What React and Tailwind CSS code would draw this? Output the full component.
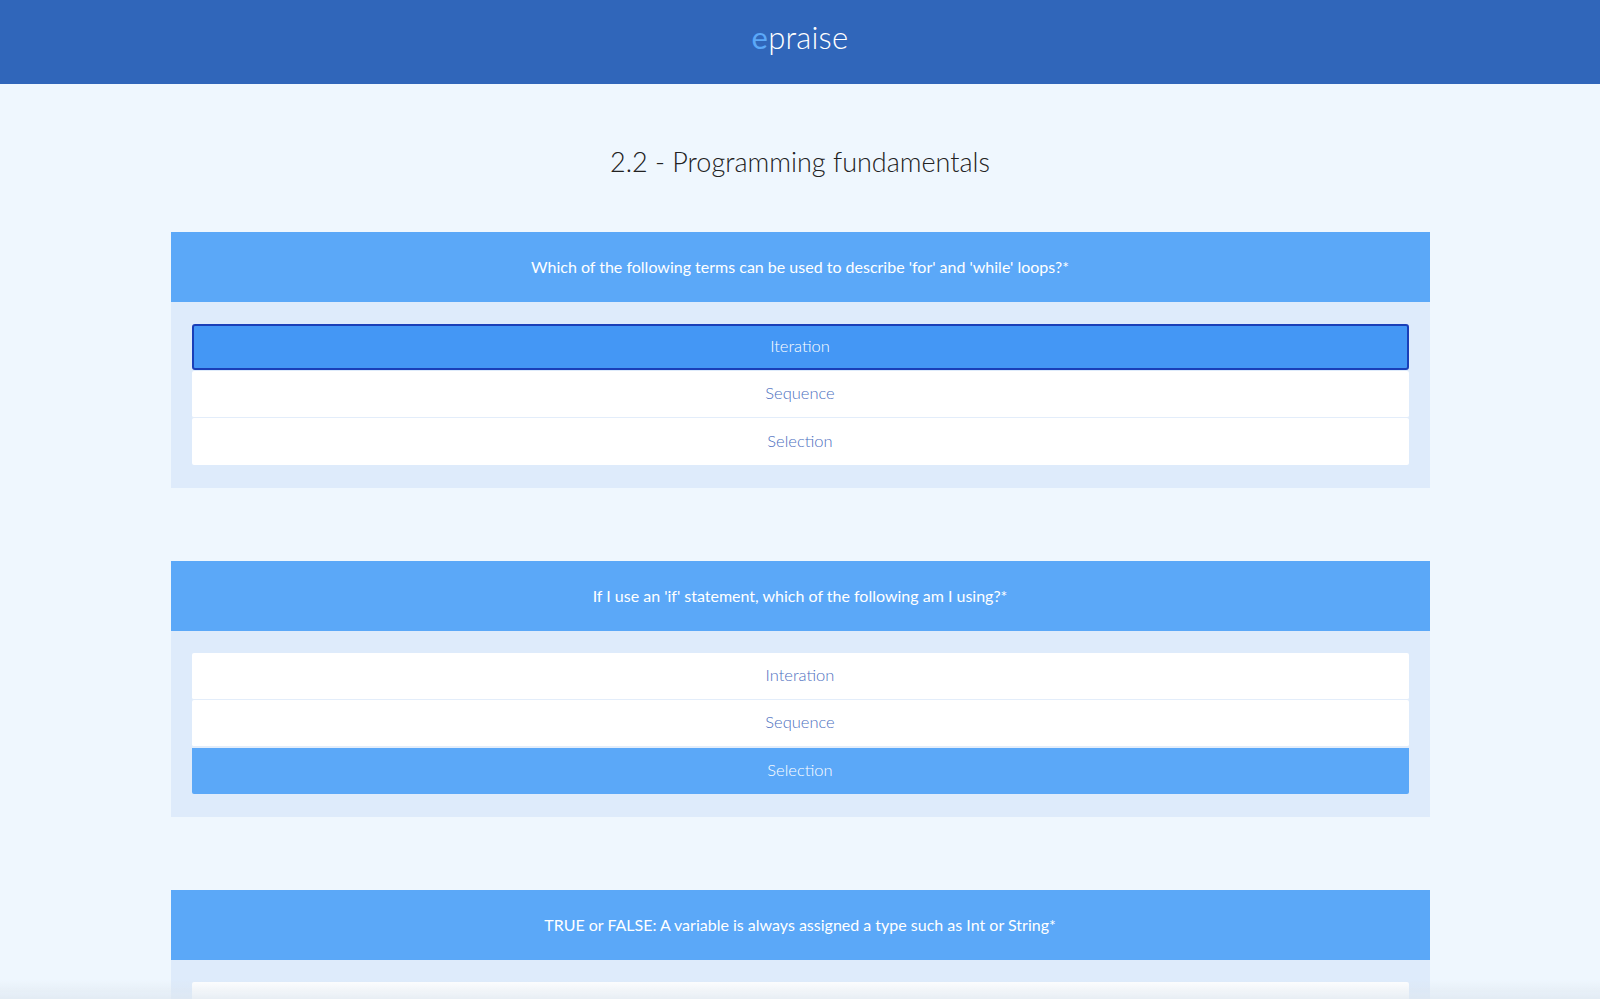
import { useState } from 'react'

const questions = [
  {
    id: 1,
    text: "Which of the following terms can be used to describe 'for' and 'while' loops?*",
    options: ['Iteration', 'Sequence', 'Selection'],
    selected: 0,
    focused: true,
  },
  {
    id: 2,
    text: "If I use an 'if' statement, which of the following am I using?*",
    options: ['Interation', 'Sequence', 'Selection'],
    selected: 2,
  },
  {
    id: 3,
    text: 'TRUE or FALSE: A variable is always assigned a type such as Int or String*',
    options: ['True', 'False'],
    selected: null,
  },
]

function Question({ q }) {
  const [selected, setSelected] = useState(q.selected)
  return (
    <div className="bg-[#deebfb]">
      <div className="h-[70px] bg-[#5ba8f8] flex items-center justify-center text-white text-[16px] font-normal">
        {q.text}
      </div>
      <div className="px-[21px] pt-[22px] pb-[23px] flex flex-col">
        {q.options.map((opt, i) => {
          const active = selected === i
          const focused = active && q.focused
          return (
            <button
              key={opt}
              onClick={() => setSelected(i)}
              className={
                focused
                  ? 'h-[46px] bg-[#4497f5] text-white font-light border-2 border-[#1a3fb8] rounded-[3px] text-[16.5px] mb-px'
                  : active
                  ? 'h-[47px] bg-[#5ba8f8] text-white font-light text-[16.5px] rounded-b-[2px] border-t border-[#e3edfa]'
                  : 'h-[47px] bg-white text-[#4d6fc0] font-light text-[16.5px] border-b border-[#e3edfa] last:border-b-0 rounded-[2px]'
              }
            >
              {opt}
            </button>
          )
        })}
      </div>
    </div>
  )
}

export default function App() {
  return (
    <div className="min-h-screen bg-[#eff7fe] font-['Lato','Liberation_Sans',sans-serif]">
      <header className="h-[84px] bg-[#3066ba] flex items-center justify-center">
        <span className="text-[31px] font-light text-white tracking-[0.2px] -mt-[10px]">
          <span className="text-[#5ba8f8] font-normal">e</span>praise
        </span>
      </header>

      <h1 className="text-center text-[27px] font-light text-[#222] mt-[58px] mb-[49px]">
        2.2 - Programming fundamentals
      </h1>

      <div className="w-[1259px] mx-auto flex flex-col gap-[73px] pb-10">
        {questions.map((q) => (
          <Question key={q.id} q={q} />
        ))}
      </div>

      {/* bottom fade */}
      <div className="fixed bottom-0 left-0 right-0 h-[20px] bg-gradient-to-b from-transparent to-[#dde6ef]/70 pointer-events-none" />
    </div>
  )
}
